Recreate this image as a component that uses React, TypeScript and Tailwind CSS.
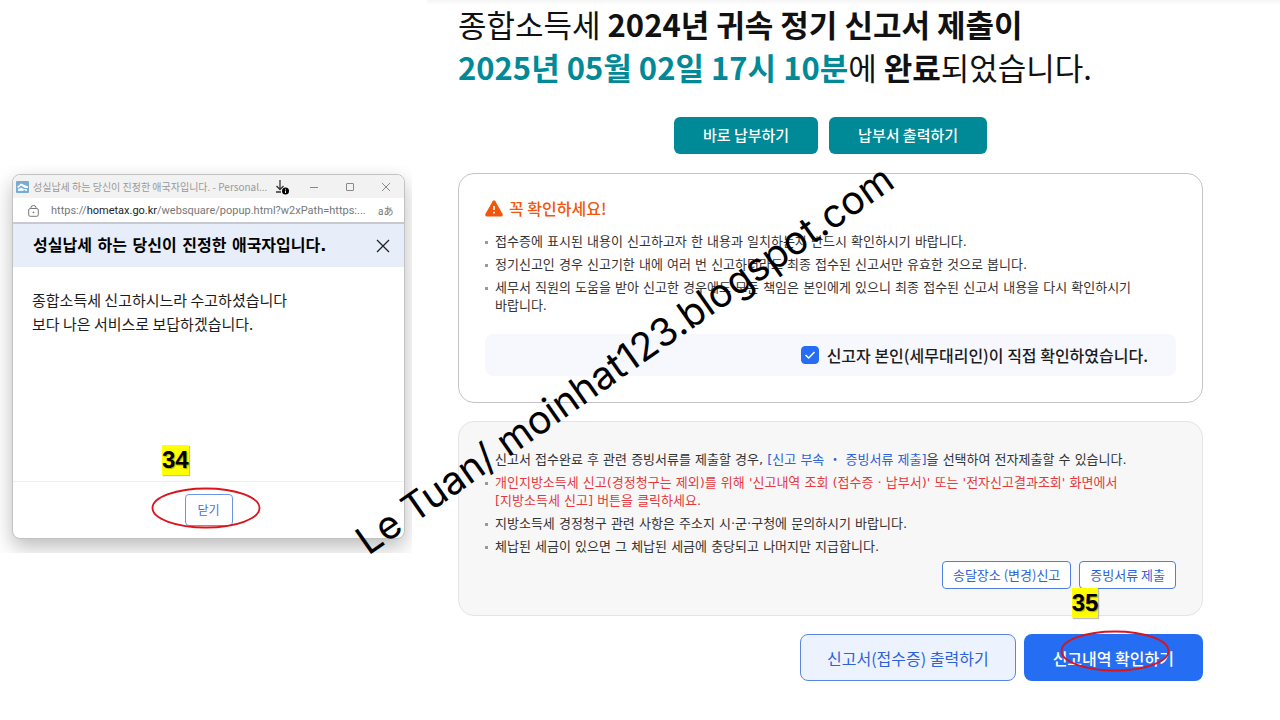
import type { ReactNode } from "react";
import { useState } from "react";

function Notice({ children, className = "" }: { children: ReactNode; className?: string }) {
    return (
        <li className="flex gap-[7px]">
            <span className="mt-2 size-[3px] shrink-0 bg-[#9a9a9a]" />
            <span className={className}>{children}</span>
        </li>
    );
}

function Marker({ children, className }: { children: ReactNode; className: string }) {
    return (
        <span className={`absolute bg-[#ffff00] font-['Liberation_Sans',sans-serif] text-2xl leading-[30px] font-bold text-black shadow-[1px_1px_1px_#8888] [text-shadow:1px_1px_1px_#0005] ${className}`}>
            {children}
        </span>
    );
}

function Ring({ className }: { className: string }) {
    return (
        <svg className={`pointer-events-none absolute h-[42px] w-[110px] ${className}`} viewBox="0 0 110 42" fill="none">
            <ellipse cx="55" cy="21" rx="53.5" ry="19.5" stroke="#d9141b" strokeWidth="1.8" />
        </svg>
    );
}

function Popup() {
    return (
        <aside className="mt-[165px] h-[388px] w-[412px] shrink-0 overflow-hidden px-[7px] pt-[9px] pl-3">
            <div className="relative flex h-[365px] flex-col rounded-lg border border-[#c2c2c2] bg-white shadow-[0_8px_20px_#0004]">
                {/* Window bar */}
                <div className="flex h-[23px] items-center rounded-t-lg bg-[#f2f2f2] pl-[3px] text-[#999]">
                    <svg className="h-3 w-[13px] shrink-0" viewBox="0 0 13 12">
                        <rect width="13" height="12" rx="1" fill="#78acd1" />
                        <path d="M1 6 5 2.5 12 5.5V7H9L5 4.5 2 7Z" fill="#fff" />
                        <path d="M2 10V8L5 6.5 8 8H11V10H9V9H7.500V10Z" fill="#e8f3fa" />
                    </svg>
                    <span className="ml-1 w-[233px] text-[10px] whitespace-nowrap">성실납세 하는 당신이 진정한 애국자입니다. - Personal...</span>
                    <svg className="ml-[9px] h-4 w-[14px] shrink-0" viewBox="0 0 14 16" fill="none">
                        <path d="M5 1V10M1.500 7 5 10.500 8.500 7M1 13H6" stroke="#333" strokeWidth="1.300" />
                        <circle cx="10.500" cy="12" r="3.500" fill="#000" />
                        <path d="M10.500 11.500V14M10.500 9.800V10.700" stroke="#fff" strokeWidth="0.900" />
                    </svg>
                    <svg className="ml-5 h-3 w-[84px] shrink-0" viewBox="0 0 84 12" fill="none" stroke="#888">
                        <path d="M1 6.500H9M73 2 81 10M81 2 73 10" />
                        <rect x="37.500" y="2.500" width="7" height="7" rx="0.500" />
                    </svg>
                </div>
                {/* Address bar */}
                <div className="flex h-[26px] shrink-0 items-center border-b-2 border-[#c6c9cf] pt-[2px] pl-[15px] font-[Roboto,'Noto_Sans_CJK_KR',sans-serif] text-[11px] text-[#777]">
                    <svg className="h-3 w-[11px] shrink-0" viewBox="0 0 11 12" fill="none" stroke="#777">
                        <rect x="0.700" y="3.500" width="9.600" height="7.800" rx="1.500" />
                        <path d="M3 3.500V2.500A2.500 2 0 0 1 8 2.500V3.500" />
                        <circle cx="5.500" cy="7.400" r="0.500" fill="#777" />
                    </svg>
                    <span className="ml-3 w-[315px] whitespace-nowrap">
                        https://<span className="text-[#222]">hometax.go.kr</span>/websquare/popup.html?w2xPath=https:...
                    </span>
                    <span className="ml-3 text-[10px] whitespace-nowrap">aあ</span>
                </div>
                {/* Message */}
                <div className="flex h-[43px] shrink-0 items-center justify-between bg-[#e7eef9] pr-[14px] pl-5">
                    <h2 className="font-['DejaVu_Sans','Noto_Sans_CJK_KR',sans-serif] text-base font-bold text-black">성실납세 하는 당신이 진정한 애국자입니다.</h2>
                    <button aria-label="닫기">
                        <svg className="size-[14px]" viewBox="0 0 14 14" stroke="#222" strokeWidth="1.300">
                            <path d="M1 1 13 13M13 1 1 13" />
                        </svg>
                    </button>
                </div>
                <p className="grow px-[19px] pt-[21px] text-[15px] leading-6 text-[#1c1c1c]">
                    종합소득세 신고하시느라 수고하셨습니다
                    <br />
                    보다 나은 서비스로 보답하겠습니다.
                </p>
                <div className="flex h-[57px] shrink-0 items-center justify-center border-t border-[#edf0f5]">
                    <button className="h-8 w-12 rounded border border-[#6d95e6] text-[12px] text-[#3f6fd8]">닫기</button>
                </div>
                <Marker className="top-[270px] left-[149px]">34</Marker>
                <Ring className="top-[312px] left-[138px]" />
            </div>
        </aside>
    );
}

function App() {
    const [confirmed, setConfirmed] = useState(true);

    return (
        <div className="relative flex min-h-screen items-start overflow-hidden bg-white font-['Noto_Sans_CJK_KR',sans-serif]">
            <Popup />

            <main className="ml-[15px] min-w-0 grow bg-linear-to-b from-[#f5f5f5] to-white to-[5px] pt-[2px] pr-[77px] pb-8 pl-[31px]">
                <h1 className="text-[31px] leading-[43px] whitespace-nowrap text-[#111]">
                    종합소득세 <b>2024년 귀속 정기 신고서 제출이</b>
                    <br />
                    <b className="text-[#008996]">2025년 05월 02일 17시 10분</b>에 <b>완료</b>되었습니다.
                </h1>

                <div className="mt-[29px] flex justify-center gap-[11px] text-[15px] font-medium text-white">
                    <button className="h-[37px] rounded-md bg-[#008996] px-[29px]">바로 납부하기</button>
                    <button className="h-[37px] rounded-md bg-[#008996] px-[29px]">납부서 출력하기</button>
                </div>

                {/* Checks before leaving */}
                <section className="mt-[19px] rounded-2xl border border-[#c4c4c4] px-[26px] pt-[22px] pb-[26px]">
                    <h2 className="flex items-center gap-[6px] text-base leading-6 font-medium text-[#f2560d]">
                        <svg className="h-[17px] w-[18px]" viewBox="0 0 18 17">
                            <path d="M7.600 1.200Q9-.6 10.400 1.200L17.600 14Q18.200 16.300 16.300 16.500H1.700Q-.2 16.300.4 14Z" fill="#f2560d" />
                            <path d="M9 6V10M9 11.800V13.600" stroke="#fff" strokeWidth="1.700" />
                        </svg>
                        꼭 확인하세요!
                    </h2>
                    <ul className="mt-[13px] flex flex-col gap-[5px] pr-6 font-['DejaVu_Sans','Noto_Sans_CJK_KR',sans-serif] text-[13px] leading-[18px] text-[#333]">
                        <Notice>접수증에 표시된 내용이 신고하고자 한 내용과 일치하는지 반드시 확인하시기 바랍니다.</Notice>
                        <Notice>정기신고인 경우 신고기한 내에 여러 번 신고하더라도 최종 접수된 신고서만 유효한 것으로 봅니다.</Notice>
                        <Notice className="break-keep">
                            세무서 직원의 도움을 받아 신고한 경우에도 모든 책임은 본인에게 있으니 최종 접수된 신고서 내용을 다시 확인하시기 바랍니다.
                        </Notice>
                    </ul>
                    <label className="mt-[19px] flex h-[42px] items-center justify-end gap-2 rounded-lg bg-[#f7f8fd] pr-7 text-base font-medium text-[#1c1c1c]">
                        <span className="relative flex">
                            <input
                                type="checkbox"
                                checked={confirmed}
                                onChange={(e) => setConfirmed(e.target.checked)}
                                className="peer size-[18px] appearance-none rounded border border-[#256ef4] checked:bg-[#256ef4]"
                            />
                            <svg className="pointer-events-none absolute inset-0 hidden size-[18px] peer-checked:block" viewBox="0 0 18 18" fill="none">
                                <path d="M4.500 9 7.700 12 13.500 6" stroke="#fff" strokeWidth="1.500" />
                            </svg>
                        </span>
                        신고자 본인(세무대리인)이 직접 확인하였습니다.
                    </label>
                </section>

                {/* Follow-up guidance */}
                <section className="mt-[18px] rounded-2xl border border-[#e4e4e4] bg-[#f7f7f7] px-[26px] pt-[29px] pb-[26px]">
                    <ul className="flex flex-col gap-[5px] font-['DejaVu_Sans','Noto_Sans_CJK_KR',sans-serif] text-[13px] leading-[18px] text-[#333]">
                        <Notice>
                            신고서 접수완료 후 관련 증빙서류를 제출할 경우, <a href="#submit" className="text-[#2d62d8]">[신고 부속 ・ 증빙서류 제출]</a>을 선택하여 전자제출할 수 있습니다.
                        </Notice>
                        <Notice className="text-[#e5393f]">
                            개인지방소득세 신고(경정청구는 제외)를 위해 '신고내역 조회 (접수증 · 납부서)' 또는 '전자신고결과조회' 화면에서
                            <br />
                            [지방소득세 신고] 버튼을 클릭하세요.
                        </Notice>
                        <Notice>지방소득세 경정청구 관련 사항은 주소지 시·군·구청에 문의하시기 바랍니다.</Notice>
                        <Notice>체납된 세금이 있으면 그 체납된 세금에 충당되고 나머지만 지급합니다.</Notice>
                    </ul>
                    <div className="mt-[5px] flex justify-end gap-2 text-[13px] text-[#2d62d8]">
                        <button className="h-7 rounded border border-[#4f7ee6] bg-white px-[10px]">송달장소 (변경)신고</button>
                        <button className="h-7 rounded border border-[#4f7ee6] bg-white px-[10px]">증빙서류 제출</button>
                    </div>
                </section>

                <div className="mt-[18px] flex justify-end gap-2 text-base">
                    <button className="h-[47px] rounded-lg border border-[#5b86e0] bg-[#ecf2fe] px-[26px] text-[#2d62d8]">신고서(접수증) 출력하기</button>
                    <div className="relative">
                        <button className="h-[47px] rounded-lg bg-[#256ef4] px-[29px] font-medium text-white">신고내역 확인하기</button>
                        <Marker className="-top-[46px] left-12">35</Marker>
                        <Ring className="-top-1 left-9" />
                    </div>
                </div>
            </main>

            <p className="pointer-events-none absolute top-[521px] left-[371px] origin-bottom-left -rotate-[35deg] font-[Inter,sans-serif] text-[39px] leading-none whitespace-nowrap text-black">
                Le Tuan/ moinhat123.blogspot.com
            </p>
        </div>
    );
}

export default App;
